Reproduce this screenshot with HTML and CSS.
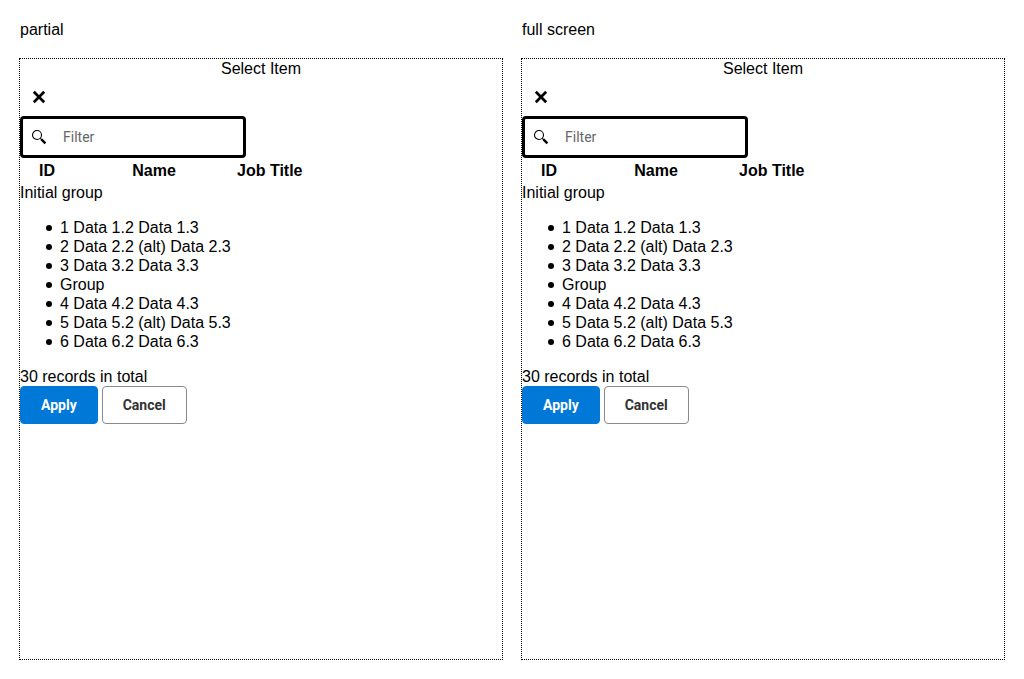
FILE: index.html
```html
<!DOCTYPE html>
<html lang="en">
<head>
<meta charset="utf-8">
<title>Select Item</title>
<link rel="stylesheet" href="styles.css">
</head>
<body>
<main class="examples">
  <section class="example">
    <div class="label">partial</div>
    <div class="viewport">
      <div class="title">Select Item</div>
      <button class="close" type="button" aria-label="Close">
        <svg width="16" height="16" viewBox="0 0 16 16" aria-hidden="true"><path d="M2.8 2.8 13.2 13.2M13.2 2.8 2.8 13.2" fill="none" stroke="#000" stroke-width="2.7"/></svg>
      </button>
      <label class="search">
        <svg width="16" height="16" viewBox="0 0 16 16" aria-hidden="true"><circle cx="6" cy="6" r="4.5" fill="none" stroke="#000" stroke-width="1.1"/><path d="M9.3 9.3 11 11" stroke="#000" stroke-width="1.2"/><path d="M10.4 10.4 14.4 14.4" stroke="#000" stroke-width="2.4"/></svg>
        <input type="text" placeholder="Filter" aria-label="Filter">
      </label>
      <table class="columns">
        <thead><tr><th class="col-id">ID</th><th class="col-name">Name</th><th>Job Title</th></tr></thead>
      </table>
      <div>Initial group</div>
      <ul class="items">
        <li>1 Data 1.2 Data 1.3</li>
        <li>2 Data 2.2 (alt) Data 2.3</li>
        <li>3 Data 3.2 Data 3.3</li>
        <li>Group</li>
        <li>4 Data 4.2 Data 4.3</li>
        <li>5 Data 5.2 (alt) Data 5.3</li>
        <li>6 Data 6.2 Data 6.3</li>
      </ul>
      <div>30 records in total</div>
      <div class="actions">
        <button class="btn btn-primary" type="button">Apply</button>
        <button class="btn" type="button">Cancel</button>
      </div>
    </div>
  </section>
  <section class="example">
    <div class="label">full screen</div>
    <div class="viewport">
      <div class="title">Select Item</div>
      <button class="close" type="button" aria-label="Close">
        <svg width="16" height="16" viewBox="0 0 16 16" aria-hidden="true"><path d="M2.8 2.8 13.2 13.2M13.2 2.8 2.8 13.2" fill="none" stroke="#000" stroke-width="2.7"/></svg>
      </button>
      <label class="search">
        <svg width="16" height="16" viewBox="0 0 16 16" aria-hidden="true"><circle cx="6" cy="6" r="4.5" fill="none" stroke="#000" stroke-width="1.1"/><path d="M9.3 9.3 11 11" stroke="#000" stroke-width="1.2"/><path d="M10.4 10.4 14.4 14.4" stroke="#000" stroke-width="2.4"/></svg>
        <input type="text" placeholder="Filter" aria-label="Filter">
      </label>
      <table class="columns">
        <thead><tr><th class="col-id">ID</th><th class="col-name">Name</th><th>Job Title</th></tr></thead>
      </table>
      <div>Initial group</div>
      <ul class="items">
        <li>1 Data 1.2 Data 1.3</li>
        <li>2 Data 2.2 (alt) Data 2.3</li>
        <li>3 Data 3.2 Data 3.3</li>
        <li>Group</li>
        <li>4 Data 4.2 Data 4.3</li>
        <li>5 Data 5.2 (alt) Data 5.3</li>
        <li>6 Data 6.2 Data 6.3</li>
      </ul>
      <div>30 records in total</div>
      <div class="actions">
        <button class="btn btn-primary" type="button">Apply</button>
        <button class="btn" type="button">Cancel</button>
      </div>
    </div>
  </section>
</main>
</body>
</html>
```
FILE: styles.css
```css
* { box-sizing: border-box; }

body {
  margin: 0;
  background: #fff;
  color: #000;
  font: 16px/19px "Liberation Sans", Arial, sans-serif;
}

.examples {
  display: grid;
  grid-template-columns: 1fr 1fr;
  gap: 20px;
  padding: 20px 20px 19px;
}

.label { margin-bottom: 20px; }

.viewport {
  min-height: 600px;
  outline: 1px dotted #000;
}

.title { text-align: center; }

.close {
  display: flex;
  align-items: center;
  justify-content: center;
  width: 38px;
  height: 38px;
  padding: 0;
  border: 0;
  background: transparent;
}

.search {
  display: flex;
  align-items: center;
  gap: 16px;
  width: 226px;
  height: 42px;
  padding: 0 8px;
  border: 3px solid #000;
  border-radius: 4px;
}

.search svg { flex: none; }

.search input {
  flex: 1;
  min-width: 0;
  padding: 0;
  border: 0;
  outline: 0;
  background: transparent;
  font: 14px/20px Roboto, sans-serif;
}

.search input::placeholder { color: #666; }

.columns { border-spacing: 2px; }
.columns th { padding: 1px; }
.columns .col-id { min-width: 50px; }
.columns .col-name { min-width: 160px; }

.items {
  margin: 16px 0;
  padding-left: 26px;
  list-style: none;
}

.items li {
  display: flex;
  gap: 8px;
}

.items li::before {
  content: "";
  flex: none;
  width: 6px;
  height: 6px;
  margin-top: 7px;
  border-radius: 50%;
  background: #000;
}

.actions {
  display: flex;
  gap: 4px;
}

.btn {
  height: 38px;
  padding: 0 20px;
  border: 1px solid #8a8a8a;
  border-radius: 4px;
  background: #fff;
  color: #333;
  font: bold 14px/20px Roboto, sans-serif;
}

.btn-primary {
  border-color: #0078d7;
  background: #0078d7;
  color: #fff;
}
```
